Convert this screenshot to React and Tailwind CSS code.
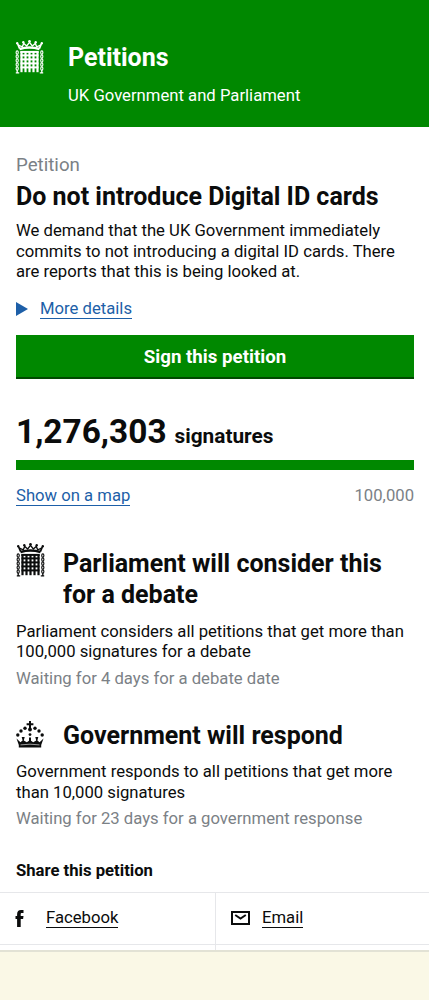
import React from 'react';

const GRID_COLUMNS = [6, 10, 14, 18, 22];
const GRID_ROWS = [15.4, 19.4, 23.4, 27.4];
const CHAIN_LINKS = [12.6, 16.6, 20.6, 24.6, 28.6];

const Portcullis = ({ className }) => (
  <svg viewBox="0 0 28 34" className={className} fill="none" stroke="currentColor" aria-hidden="true">
    <path d="M4.2 8.6 2.2 4M23.8 8.6l2-4.6" strokeWidth="1.8" />
    <path d="M4 9Q14 6 24 9" strokeWidth="2.4" />
    <path d="m3 5.2 3.800 1.600 1.400-3.400 3 2.600L14 2.400l2.800 3.600 3-2.600 1.400 3.400L25 5.200" strokeWidth="1.3" />
    <g fill="currentColor" stroke="none">
      <circle cx="1.7" cy="3.2" r="1.2" />
      <circle cx="7.8" cy="2.3" r="1.2" />
      <circle cx="14" cy="1.3" r="1.3" />
      <circle cx="20.2" cy="2.3" r="1.2" />
      <circle cx="26.3" cy="3.2" r="1.2" />
    </g>
    {GRID_COLUMNS.map((x) => (
      <path key={x} d={`M${x} 11.5V32.2`} strokeWidth="2.2" />
    ))}
    {GRID_ROWS.map((y) => (
      <path key={y} d={`M5 ${y}H23`} strokeWidth="2" />
    ))}
    <path d="M4.8 11.900H23.200" strokeWidth="2" />
    {CHAIN_LINKS.map((y) => (
      <g key={y} strokeWidth="1.1">
        <ellipse cx="1.7" cy={y} rx="1.1" ry="1.7" />
        <ellipse cx="26.3" cy={y} rx="1.1" ry="1.7" />
      </g>
    ))}
    <path d="M.3 32.8h3.4M24.3 32.8h3.4M1.7 30v3M26.3 30v3" strokeWidth="1.3" />
  </svg>
);

const Crown = ({ className }) => (
  <svg viewBox="0 0 28 27" className={className} fill="currentColor" aria-hidden="true">
    <path d="M13 0h2v2.2h2.4v2H15V7h-2V4.200h-2.400v-2H13z" />
    <circle cx="14" cy="8.5" r="1.9" />
    <circle cx="14" cy="13.6" r="1.4" />
    <circle cx="9" cy="7.2" r="1.7" />
    <circle cx="19" cy="7.2" r="1.7" />
    <circle cx="5" cy="10" r="1.7" />
    <circle cx="23" cy="10" r="1.7" />
    <circle cx="1.8" cy="14" r="1.7" />
    <circle cx="26.2" cy="14" r="1.7" />
    <path d="M.5 17.500 4.400 21.200l2.200-1.600-.9-3.600h3l-.9 3.600 3 1.700 2.200-1.600V16.500h2v3.200l2.200 1.600 3-1.700-.9-3.600h3l-.9 3.600 2.200 1.600 3.900-3.700L25.200 24v2.600H2.800V24z" />
    <path d="M4.500 23.900q9.500-1.400 19 0" fill="none" stroke="#fff" strokeWidth=".6" />
  </svg>
);

const Milestone = ({ icon, title, children, waiting, className }) => (
  <section className={className}>
    <div className="flex">
      <div className="w-[47px] shrink-0">{icon}</div>
      <h2 className="pt-[5px] text-[25px] font-bold leading-[31px]">{title}</h2>
    </div>
    <p className="mt-[11.5px] text-[16.68px] leading-[20.8px]">{children}</p>
    <p className="mt-[5.5px] text-[16.68px] leading-[20.8px] text-[#7b8186]">{waiting}</p>
  </section>
);

const App = () => {
  return (
    <div className="h-[1000px] w-full overflow-hidden bg-white font-['Roboto',sans-serif] text-[#0b0c0c]">
      <header className="flex h-[127px] bg-[#008800] pl-[15px] pt-10 text-white">
        <Portcullis className="h-[34px] w-[29px] shrink-0" />
        <div className="pl-[24px]">
          <h1 className="pt-[2px] text-[25px] font-bold leading-[31px]">Petitions</h1>
          <p className="mt-3 text-[16.68px] leading-[21px]">UK Government and Parliament</p>
        </div>
      </header>

      <main>
        <div className="pl-4 pr-[15px]">
          <p className="pt-[26px] text-[18.7px] leading-6 text-[#7b8186]">Petition</p>
          <h1 className="mt-1 text-[25px] font-bold leading-[31px]">Do not introduce Digital ID cards</h1>
          <p className="mt-[9px] text-[16.68px] leading-[20.7px]">
            We demand that the UK Government immediately commits to not introducing a digital ID cards. There are
            reports that this is being looked at.
          </p>

          <div className="mt-[15px] flex h-[21px] items-center text-[#1d5fa8]">
            <svg viewBox="0 0 12 14" className="h-[14px] w-3" fill="currentColor" aria-hidden="true">
              <path d="M0 0l12 7L0 14z" />
            </svg>
            <a href="#details" className="ml-3 border-b border-current text-[16.68px] leading-[19px]">More details</a>
          </div>

          <button className="mt-[15.5px] block h-11 w-full border-b-2 border-[#004a00] bg-[#008800] pt-[2px] text-[18.7px] font-bold text-white">
            Sign this petition
          </button>

          <p className="mt-[30px] flex h-[51px] items-baseline font-bold leading-[46px]">
            <span className="text-[33.4px]">1,276,303</span>
            <span className="ml-2 text-[20.8px]">signatures</span>
          </p>
          <div className="h-[10px] bg-[#008800]" />
          <div className="mt-4 flex items-start justify-between text-[16.68px] leading-[19px]">
            <a href="#map" className="border-b border-current text-[#1d5fa8]">Show on a map</a>
            <span className="text-[#7b8186]">100,000</span>
          </div>

          <Milestone
            className="mt-[37.5px]"
            icon={<Portcullis className="h-[34px] w-[29px]" />}
            title="Parliament will consider this for a debate"
            waiting="Waiting for 4 days for a debate date"
          >
            Parliament considers all petitions that get more than 100,000 signatures for a debate
          </Milestone>

          <Milestone
            className="mt-[25px]"
            icon={<Crown className="mt-[6px] h-[27px] w-[28px]" />}
            title="Government will respond"
            waiting="Waiting for 23 days for a government response"
          >
            Government responds to all petitions that get more than 10,000 signatures
          </Milestone>

          <h2 className="mt-[30px] text-[16.68px] font-bold leading-[21px]">Share this petition</h2>
        </div>

        <ul className="mt-[11px] grid h-[58px] grid-cols-[216px_1fr] grid-rows-[52px_1fr] border-t border-[#e6e7ea] text-[16.68px] leading-[19px]">
          <li className="flex items-center border-b border-r border-[#e6e7ea] pl-[15px]">
            <svg viewBox="0 0 8 17" className="h-[17px] w-[9px]" fill="currentColor" aria-hidden="true">
              <path d="M1.600 17V9H0V6h1.600V4.200C1.600 1.500 3 0 5.600 0H8v3H6.500C5.500 3 5.200 3.400 5.200 4.300V6H8l-.4 3H5.200v8z" />
            </svg>
            <a href="#facebook" className="ml-[22px] border-b border-current">Facebook</a>
          </li>
          <li className="flex items-center border-b border-[#e6e7ea] pl-[15px]">
            <svg viewBox="0 0 19 14" className="h-[14px] w-[19px]" fill="none" stroke="currentColor" aria-hidden="true">
              <path d="M1 1h17v12H1z" strokeWidth="2" />
              <path d="m4.200 4 5.300 3.500L14.800 4" strokeWidth="2" />
            </svg>
            <a href="#email" className="ml-3 border-b border-current">Email</a>
          </li>
          <li className="border-r border-[#e6e7ea]" />
          <li />
        </ul>
      </main>

      <div className="h-[60px] border-t-2 border-[#e2e2d5] bg-[#faf8e6]" />
    </div>
  );
};

export default App;
